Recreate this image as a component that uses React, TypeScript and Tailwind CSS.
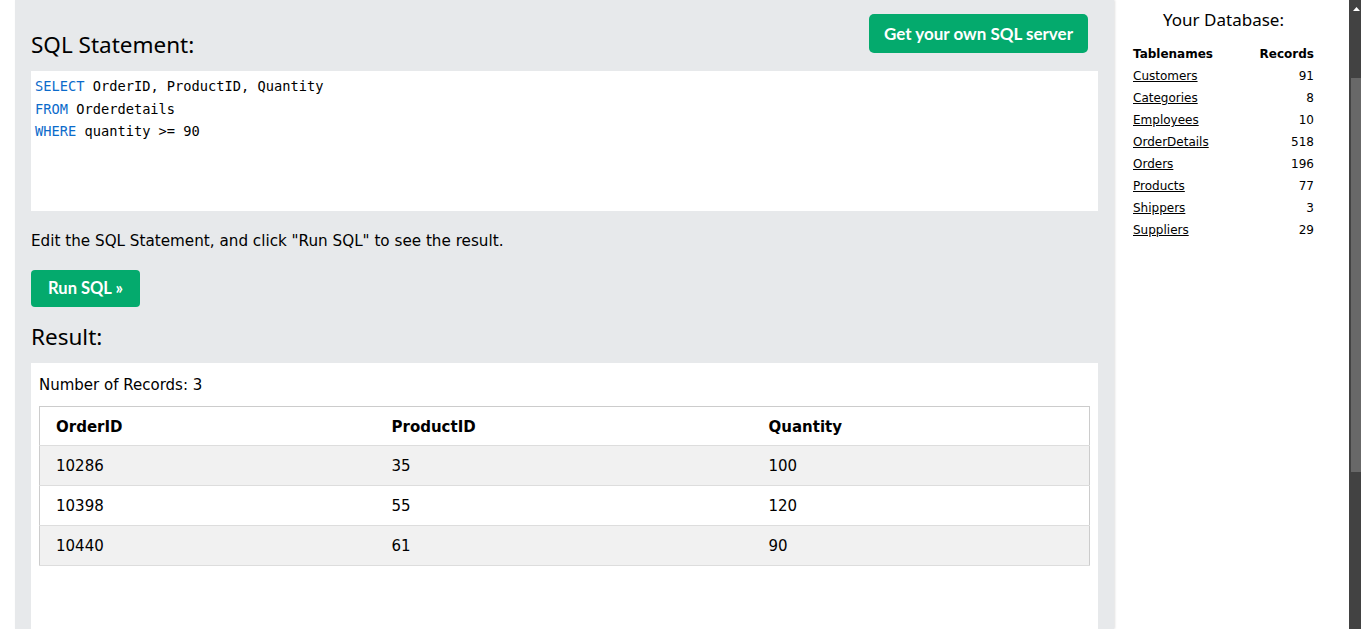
const heading = { fontFamily: '"Noto Sans", "Open Sans", sans-serif' };
const body = { fontFamily: '"DejaVu Sans", Verdana, sans-serif' };
const mono = { fontFamily: '"DejaVu Sans Mono", "Liberation Mono", monospace' };
const btn = { fontFamily: 'Lato, "Open Sans", sans-serif' };

const results = [
  { order: '10286', product: '35', qty: '100' },
  { order: '10398', product: '55', qty: '120' },
  { order: '10440', product: '61', qty: '90' },
];

const tables = [
  ['Customers', 91],
  ['Categories', 8],
  ['Employees', 10],
  ['OrderDetails', 518],
  ['Orders', 196],
  ['Products', 77],
  ['Shippers', 3],
  ['Suppliers', 29],
];

export default function App() {
  return (
    <div className="flex h-[629px] w-[1361px] overflow-hidden bg-white text-black">
      <div className="w-[15px] shrink-0" />

      {/* main editor panel */}
      <div className="flex h-full w-[1099px] shrink-0 flex-col bg-[#e7e9eb] px-4 pt-[14px] shadow-[1px_0_2px_rgba(0,0,0,0.12)]">
        <div className="flex h-[57px] items-start justify-between">
          <h2 className="mt-[16px] text-[22.5px] leading-[30px]" style={heading}>
            SQL Statement:
          </h2>
          <button
            className="mr-[10px] h-[39px] rounded-[5px] bg-[#04aa6d] px-[15px] text-[17px] font-bold text-white"
            style={btn}
          >
            Get your own SQL server
          </button>
        </div>

        <div className="h-[140px] bg-white pl-[4px] pt-[4px] text-[13.7px] leading-[22.5px]" style={mono}>
          <div>
            <span className="text-[#0b6bcb]">SELECT</span> OrderID, ProductID, Quantity
          </div>
          <div>
            <span className="text-[#0b6bcb]">FROM</span> Orderdetails
          </div>
          <div>
            <span className="text-[#0b6bcb]">WHERE</span> quantity &gt;= 90
          </div>
        </div>

        <p className="mt-[19px] text-[15.2px] leading-[22px]" style={body}>
          Edit the SQL Statement, and click "Run SQL" to see the result.
        </p>

        <div className="mt-[18px]">
          <button
            className="h-[37px] w-[109px] rounded-[4px] bg-[#04aa6d] text-[16.5px] font-bold text-white"
            style={btn}
          >
            Run SQL »
          </button>
        </div>

        <h2 className="mt-[15px] text-[22.5px] leading-[30px]" style={heading}>
          Result:
        </h2>

        <div className="mt-[11px] flex-1 bg-white px-2 pt-[11px]" style={body}>
          <div className="text-[15px] leading-[22px]">Number of Records: 3</div>
          <table className="mt-[10px] w-full border-collapse border border-[#ccc] text-left text-[15px]">
            <thead>
              <tr className="h-[39px] border-b border-[#ddd]">
                <th className="w-[336px] pl-4 pt-[2px] font-bold">OrderID</th>
                <th className="w-[377px] pl-4 pt-[2px] font-bold">ProductID</th>
                <th className="pl-4 pt-[2px] font-bold">Quantity</th>
              </tr>
            </thead>
            <tbody>
              {results.map((r, i) => (
                <tr
                  key={r.order}
                  className={`h-[40px] border-b border-[#ddd] ${i % 2 === 0 ? 'bg-[#f1f1f1]' : 'bg-white'}`}
                >
                  <td className="pl-4 pt-[2px]">{r.order}</td>
                  <td className="pl-4 pt-[2px]">{r.product}</td>
                  <td className="pl-4 pt-[2px]">{r.qty}</td>
                </tr>
              ))}
            </tbody>
          </table>
        </div>
      </div>

      {/* database sidebar */}
      <div className="w-[235px] shrink-0 pl-[19px]">
        <div className="w-[181px]">
          <div className="pt-[9px] text-center text-[17px] leading-[22px]" style={heading}>
            Your Database:
          </div>
          <table className="mt-[12px] w-full text-[12px]" style={body}>
            <thead>
              <tr className="h-[22px]">
                <th className="text-left font-bold">Tablenames</th>
                <th className="text-right font-bold">Records</th>
              </tr>
            </thead>
            <tbody>
              {tables.map(([name, n]) => (
                <tr key={name} className="h-[22px]">
                  <td className="text-left">
                    <a className="underline">{name}</a>
                  </td>
                  <td className="text-right">{n}</td>
                </tr>
              ))}
            </tbody>
          </table>
        </div>
      </div>

      {/* fake scrollbar */}
      <div className="flex w-[12px] shrink-0 flex-col bg-[#424242] pl-[2px]">
        <div className="flex h-[18px] items-center justify-center">
          <svg width="7" height="4" viewBox="0 0 7 4">
            <path d="M0 4 L3.5 0 L7 4 Z" fill="#fff" />
          </svg>
        </div>
        <div className="mt-[60px] h-[394px] bg-[#686868]" />
      </div>
    </div>
  );
}
